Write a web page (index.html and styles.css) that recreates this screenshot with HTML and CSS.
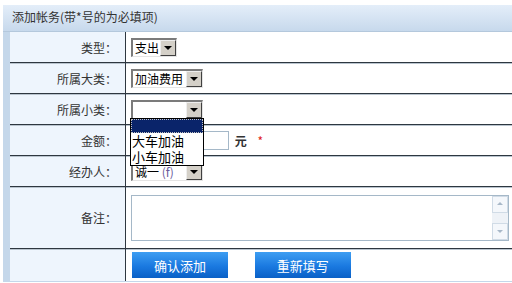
FILE: index.html
```html
<!DOCTYPE html>
<html lang="zh-CN">
<head>
  <meta charset="UTF-8" />
  <title>添加帐务</title>
  <link rel="stylesheet" href="styles.css">
</head>
<body>
  <div class="panel">
    <div class="panel-title">添加帐务(带*号的为必填项)</div>
    <div class="panel-body">
      <table class="form-table">
        <tr>
          <th>类型：</th>
          <td>
            <span class="select" style="width:46px"><span class="select-text">支出</span><span class="select-btn"></span></span>
          </td>
        </tr>
        <tr>
          <th>所属大类：</th>
          <td>
            <span class="select" style="width:72px"><span class="select-text">加油费用</span><span class="select-btn"></span></span>
          </td>
        </tr>
        <tr>
          <th>所属小类：</th>
          <td class="has-menu">
            <span class="select" style="width:72px"><span class="select-text"></span><span class="select-btn"></span></span>
            <ul class="dropdown">
              <li class="active"></li>
              <li>大车加油</li>
              <li>小车加油</li>
            </ul>
          </td>
        </tr>
        <tr>
          <th>金额：</th>
          <td>
            <span class="text-input"></span>
            <span class="unit">元</span>
            <span class="required">*</span>
          </td>
        </tr>
        <tr>
          <th>经办人：</th>
          <td>
            <span class="select" style="width:72px"><span class="select-text">诚一 <em>(f)</em></span><span class="select-btn"></span></span>
          </td>
        </tr>
        <tr class="memo-row">
          <th>备注：</th>
          <td>
            <div class="textarea">
              <div class="scrollbar">
                <span class="arrow up"></span>
                <span class="arrow down"></span>
              </div>
            </div>
          </td>
        </tr>
        <tr class="btn-row">
          <th></th>
          <td>
            <button class="btn">确认添加</button>
            <button class="btn">重新填写</button>
          </td>
        </tr>
      </table>
    </div>
  </div>
</body>
</html>
```

FILE: styles.css
```css
body {
  margin: 0;
  background: #fff;
  font-family: "Noto Sans CJK SC", "Liberation Sans", sans-serif;
  font-size: 12px;
  color: #333;
}

.panel {
  margin: 5px 0 0 3px;
  background: #c4d7ea;
}

.panel-title {
  height: 26px;
  line-height: 24px;
  padding-left: 9px;
  background: linear-gradient(#e4eef9, #c7d9ec);
  border-bottom: 1px solid #b4c8dc;
  color: #333;
}

.panel-body {
  padding-left: 7px;
  padding-bottom: 1px;
}

.form-table {
  width: 100%;
  border-collapse: collapse;
}

.form-table th,
.form-table td {
  padding: 0;
  height: 30px;
  border-top: 1px solid #2e3740;
  box-shadow: inset 0 1px 0 #b9c4ce;
}

.form-table tr:first-child th,
.form-table tr:first-child td {
  border-top: none;
  box-shadow: none;
}

.form-table th {
  width: 107px;
  padding-right: 8px;
  text-align: right;
  font-weight: normal;
  color: #333;
  background: #eef5fd;
  border-right: 1px solid #2e3740;
}

.form-table td {
  background: #fff;
  padding-left: 5px;
}

.select {
  display: inline-flex;
  align-items: center;
  height: 19px;
  box-sizing: border-box;
  border-top: 2px solid #7b7b7b;
  border-left: 2px solid #7b7b7b;
  border-right: 1px solid #e4e4e4;
  border-bottom: 1px solid #e4e4e4;
  background: #fff;
  vertical-align: middle;
}

.select-text {
  flex: 1;
  padding-left: 2px;
  font-size: 12px;
  line-height: 16px;
  color: #000;
  white-space: nowrap;
}

.select-text em {
  font-style: normal;
  color: #6a5a9a;
}

.select-btn {
  position: relative;
  flex: none;
  width: 16px;
  height: 16px;
  box-sizing: border-box;
  background: #d4d0c8;
  border-top: 1px solid #eee;
  border-left: 1px solid #eee;
  border-right: 1px solid #404040;
  border-bottom: 1px solid #404040;
}

.select-btn::after {
  content: "";
  position: absolute;
  left: 3px;
  top: 5px;
  border-left: 4px solid transparent;
  border-right: 4px solid transparent;
  border-top: 4px solid #000;
}

.has-menu {
  position: relative;
}

.dropdown {
  position: absolute;
  left: 4px;
  top: 24px;
  width: 72px;
  margin: 0;
  padding: 0;
  list-style: none;
  background: #fff;
  border: 1px solid #000;
  z-index: 2;
}

.dropdown li {
  height: 16px;
  line-height: 16px;
  padding-left: 1px;
  font-size: 13px;
  color: #000;
}

.dropdown li.active {
  height: 14px;
  background: #0a246a;
  outline: 1px dotted #c0c0c0;
  outline-offset: -1px;
}

.text-input {
  display: inline-block;
  width: 98px;
  height: 19px;
  box-sizing: border-box;
  border: 1px solid #a5b8c8;
  vertical-align: middle;
}

.unit {
  margin-left: 3px;
  font-weight: bold;
  color: #333;
  vertical-align: middle;
}

.required {
  margin-left: 8px;
  color: #e02020;
  vertical-align: middle;
}

.memo-row th,
.memo-row td {
  height: 61px;
}

.textarea {
  position: relative;
  height: 46px;
  margin-right: 3px;
  box-sizing: border-box;
  border: 1px solid #a5b8c8;
  background: #fff;
}

.scrollbar {
  position: absolute;
  right: 0;
  top: 0;
  bottom: 0;
  width: 16px;
  background: #eef2f7;
  display: flex;
  flex-direction: column;
  justify-content: space-between;
}

.arrow {
  position: relative;
  height: 15px;
  background: #f4f7fb;
  border: 1px solid #d0dbe6;
}

.arrow::after {
  content: "";
  position: absolute;
  left: 4px;
  border-left: 3px solid transparent;
  border-right: 3px solid transparent;
}

.arrow.up::after {
  top: 5px;
  border-bottom: 3px solid #a8b8c8;
}

.arrow.down::after {
  top: 6px;
  border-top: 3px solid #a8b8c8;
}

.btn-row th,
.btn-row td {
  height: 32px;
}

.btn-row td {
  padding-left: 6px;
}

.btn {
  width: 96px;
  height: 26px;
  margin-right: 24px;
  border: none;
  background: linear-gradient(#3e9ef2, #1a79e0 55%, #0a60c6);
  color: #fff;
  font-family: inherit;
  font-size: 13px;
  vertical-align: middle;
}
```
